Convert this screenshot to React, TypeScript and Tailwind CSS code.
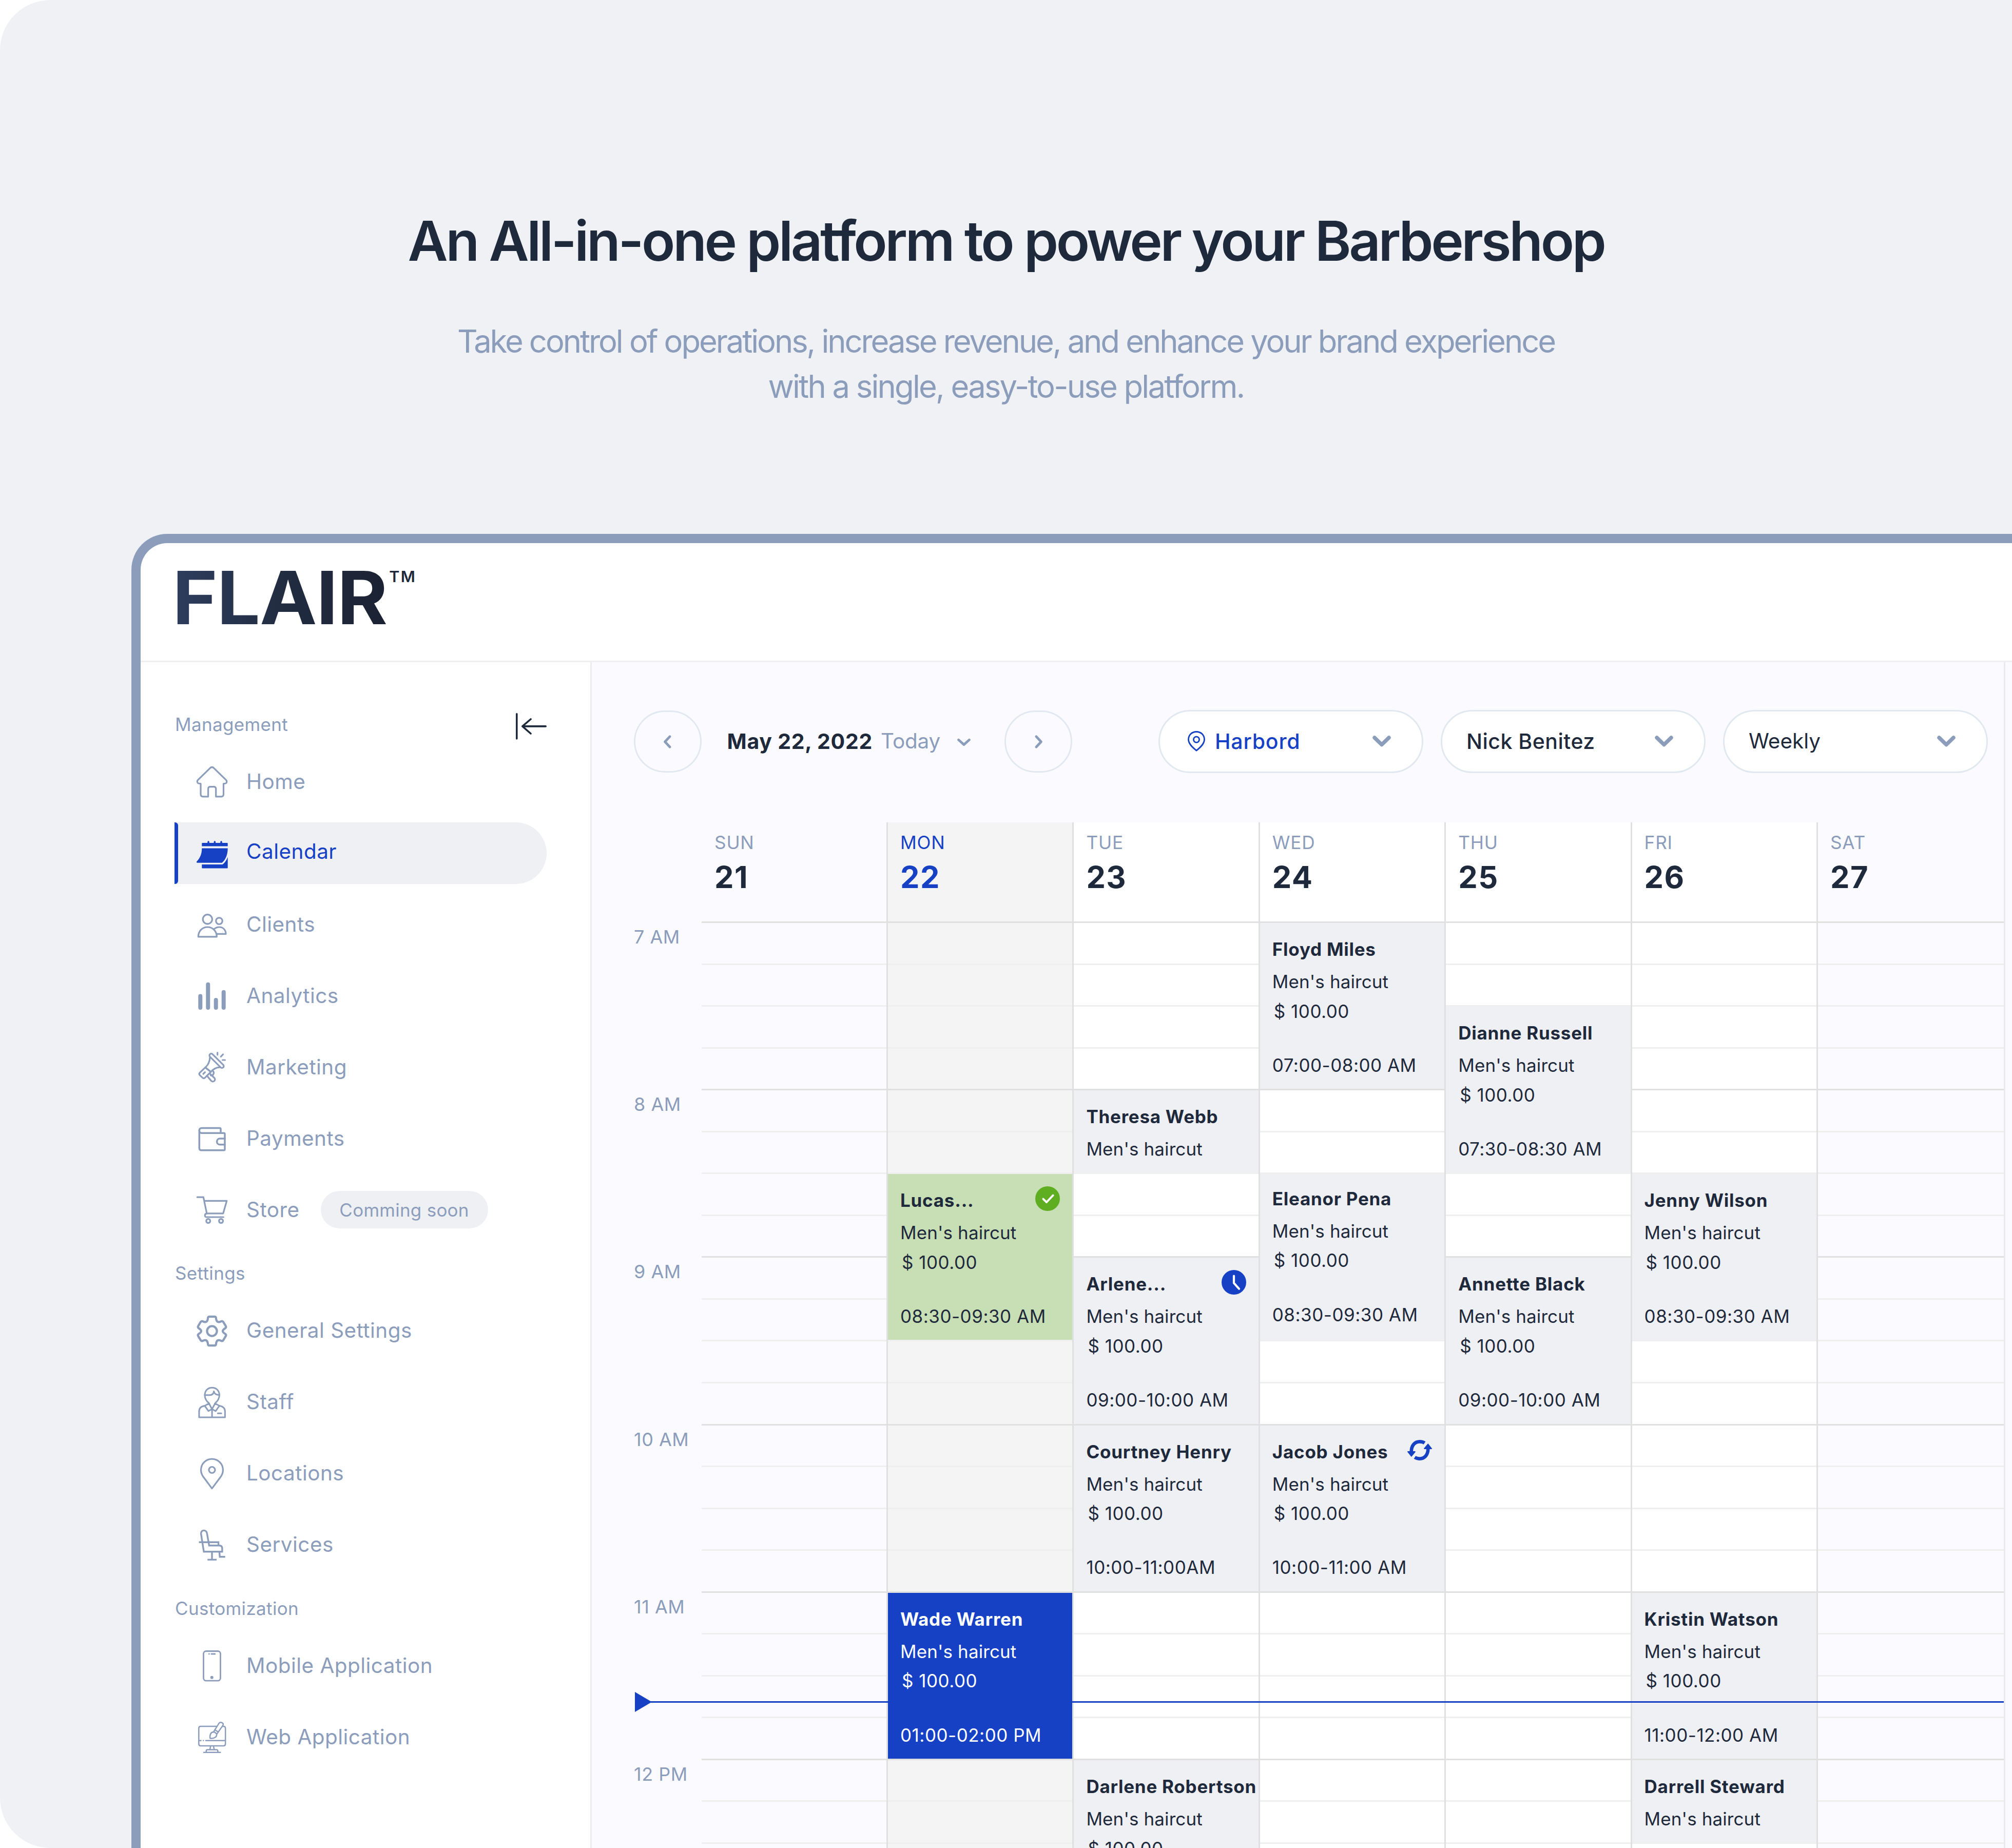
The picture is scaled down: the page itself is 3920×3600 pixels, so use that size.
import type { ReactNode } from "react";

/* ---------- Icons ---------- */

function Icon({ children, width = 3.2, color = "text-[#8c9dbc]" }: { children: ReactNode; width?: number; color?: string }) {
  return (
    <svg
      viewBox="0 0 60 60"
      className={`size-[60px] shrink-0 overflow-visible ${color}`}
      fill="none"
      stroke="currentColor"
      strokeWidth={width}
      strokeLinecap="round"
      strokeLinejoin="round"
    >
      {children}
    </svg>
  );
}

const HomeIcon = () => (
  <Icon>
    <path d="M27 2.6Q30 .4 33 2.6L57.6 26.6Q59.6 29 58.2 31.8Q57 33.5 54 33.5H52.5V54Q52.5 58.8 48 58.8H37.7V44Q37.7 39.7 33.7 39.7H26.6Q22.6 39.7 22.6 44V58.8H12.5Q8 58.8 8 54V33.5H6.2Q3 33.5 2 31.8Q.4 29 2.4 26.6Z" />
  </Icon>
);

const CalendarIcon = () => (
  <svg viewBox="0 0 60 60" className="size-[60px] shrink-0 overflow-visible text-[#1641c5]" fill="currentColor">
    <path d="M10.3 11Q10.3 10 11.3 10H21.3V7.7Q23 4.2 24.8 7.7V10H33.6V7.7Q35.3 4.2 37.1 7.7V10H46.3V7.7Q48 4.2 49.8 7.7V10H59.7Q60.7 10 60.7 11V16.4H10.3Z" />
    <path d="M10.3 20.4H60.7C60.7 34 56 43 49.5 48.7H1.2Q-1 48 .4 46C7 39 10.3 31 10.3 20.4Z" />
    <path d="M10.3 52H50.5C54.8 49 58.5 43.5 60.7 37.4V58.4Q60.7 59.4 59.7 59.4H11.3Q10.3 59.4 10.3 58.4Z" />
  </svg>
);

const ClientsIcon = () => (
  <Icon>
    <circle cx="21.3" cy="19.7" r="9.1" />
    <circle cx="44" cy="23.1" r="6.3" />
    <path d="M3.3 53.8C3.3 43 11 35 21.3 35S39.3 43 39.3 53.8Z" />
    <path d="M34 39C37 36.3 40.5 35 44.3 35C51.5 35 57 40.5 57 48.4H40" />
  </Icon>
);

const AnalyticsIcon = () => (
  <Icon width={8}>
    <path d="M7.3 30.4V53M22.3 7.7V53M37.7 38V53M52.7 22.7V53" />
  </Icon>
);

const MarketingIcon = () => (
  <Icon>
    <rect x="-18.3" y="-3.5" width="36.6" height="7" rx="3.5" transform="translate(39 17.5) rotate(45)" />
    <path d="M26 11C25.6 19 22.6 25.6 17 30.4L27.8 39C32.6 33.6 38.6 30.4 45 30.2" />
    <path d="M17 30.4L6.3 40.6Q4 43 6.2 45.3L12 50.8Q14.2 52.6 16.5 50.3L27.8 39Z" />
    <path d="M13 43L16.4 39.6" />
    <path d="M20.5 47L28.6 56.6A4.1 4.1 0 0 0 34.8 51L26.5 43" />
    <path d="M31 36.5C35.4 39.6 33.4 46.6 27.5 46" />
    <path d="M40.7 1.6V5.8M51.6 4.9L47.3 9.4M50.6 16H55.4" />
  </Icon>
);

const PaymentsIcon = () => (
  <Icon width={3.5}>
    <path d="M5.3 14.5Q5.3 9.4 10 9.4H45Q47 9.4 47 11.4V19.2" />
    <path d="M5.3 14.5Q5.3 19.2 10 19.2H53Q55 19.2 55 21.2V50.7Q55 52.8 53 52.8H9.5Q5.3 52.8 5.3 48.5V14.5" />
    <path d="M55 30H45.5C37.7 30 37.7 41.8 45.5 41.8H55" />
  </Icon>
);

const StoreIcon = () => (
  <Icon>
    <path d="M1.3 5.2H13.3L19.9 36.8H51.8L58.8 12.4H15" />
    <path d="M19.9 36.8C15.2 37.2 15.2 44 19 44H52.3" />
    <circle cx="22.7" cy="51.5" r="3.9" />
    <circle cx="47.6" cy="51.5" r="3.9" />
  </Icon>
);

const SettingsIcon = () => (
  <Icon width={4.2}>
    <circle cx="30" cy="31" r="9.6" />
    <path d="M25 2.8H35Q37.7 2.8 37.9 5.6Q38.4 13 43 13.4Q44.6 13.6 48 12Q50.4 10.9 52 13.2L56.8 21.2Q58.3 23.6 56 25.4Q51 28.4 51 31Q51 33.6 56 36.6Q58.3 38.4 56.8 40.8L52 48.8Q50.4 51.1 48 50Q44.6 48.4 43 48.6Q38.4 49 37.9 56.4Q37.7 59.2 35 59.2H25Q22.3 59.2 22.1 56.4Q21.6 49 17 48.6Q15.4 48.4 12 50Q9.6 51.1 8 48.8L3.2 40.8Q1.7 38.4 4 36.6Q9 33.6 9 31Q9 28.4 4 25.4Q1.7 23.6 3.2 21.2L8 13.2Q9.6 10.9 12 12Q15.4 13.6 17 13.4Q21.6 13 22.1 5.6Q22.3 2.8 25 2.8Z" />
  </Icon>
);

const StaffIcon = () => (
  <Icon width={3}>
    <path d="M24.5 33C19 28.4 16 23 16 17C16 8 22 2.2 30.2 2.2S44.4 8 44.4 17C44.4 23 41 28.4 35.8 33" />
    <path d="M16 16.7H25.5Q33 16.5 33.7 9.5Q34.8 16 44.4 16.7" />
    <path d="M24.4 33.2L15.8 37.5L23.2 47.8L30 44L24.4 33.2M36 33.2L44.5 37.5L37.2 47.8L30 44L36 33.2" />
    <path d="M16 37.6C8 38.8 4.9 42.4 4.9 48.5V60H55.4V48.5C55.4 42.4 51.5 38.8 44.4 37.6M30.1 44V60M41.3 52.3H48.2" />
  </Icon>
);

const LocationIcon = () => (
  <Icon>
    <path d="M30 59.6L13.5 37.5C10 33 8.6 29 8.6 23.7C8.6 11.5 18 2.2 30 2.2S51.4 11.5 51.4 23.7C51.4 29 50 33 46.5 37.5Z" />
    <circle cx="30" cy="23.5" r="6" />
  </Icon>
);

const ServicesIcon = () => (
  <svg viewBox="0 0 60 60" className="size-[60px] shrink-0 overflow-visible text-[#8c9dbc]" fill="none" stroke="currentColor" strokeWidth={3.4}>
    <path d="M14.1 43.7L8.7 9C8 .2 19.4 .2 20.4 8.5L24.5 31.8H44Q49.9 31.8 49.9 37.2V43.7Z" />
    <path d="M4.5 25.3H42.6V31.8M30 43.7V59.3M21.3 59.4H39M44.4 44L45.2 53.8H55.8" />
  </svg>
);

const MobileIcon = () => (
  <Icon width={2.8}>
    <rect x="13.5" y="1.5" width="33" height="57.6" rx="5" />
    <path d="M28.8 7H35.8M24.3 7H24.4" />
    <circle cx="29.8" cy="52.8" r="3" fill="currentColor" stroke="none" />
  </Icon>
);

const WebIcon = () => (
  <Icon width={2.5}>
    <path d="M39 9H8Q4.3 9 4.3 12.7V43.3Q4.3 47 8 47H52.5Q56.2 47 56.2 43.3V12.7Q56.2 9 52.5 9H50.5" />
    <path d="M4.3 36.8H8.6M13.2 36.8H13.3M18 36.8H56" />
    <path d="M27.2 47.5L26 54.3M33 47.5L34.3 54.3M18.8 59V57Q18.8 54.4 21.4 54.4H38.8Q41.4 54.4 41.4 57V59M14 59.7H46.4" />
    <path d="M33 20L43.6 3.2C46.6 -.9 53.5 2.6 51.4 7L39.4 24M35.7 15.8L42.2 20" />
    <path d="M33 20C28 20 25.4 25 26.3 32.3C34 33 39.5 30 39.2 24.5Q37 20.4 33 20Z" />
  </Icon>
);

const CollapseIcon = () => (
  <svg viewBox="0 0 60 52" className="mt-[7px] h-[52px] w-[60px]" fill="none" stroke="#1e293b" strokeWidth={3.6} strokeLinecap="round" strokeLinejoin="round">
    <path d="M1.8 1.8V50M58.2 25.9H12.8M29 12L12.8 25.9L29 40" />
  </svg>
);

const PinIcon = () => (
  <svg viewBox="0 0 34 40" className="h-[40px] w-[34px] shrink-0" fill="none" stroke="#1641c5" strokeWidth={2.8} strokeLinejoin="round">
    <path d="M17 38.2C8 31 1.5 24.5 1.5 16.6C1.5 7.8 8.2 1.5 17 1.5S32.5 7.8 32.5 16.6C32.5 24.5 26 31 17 38.2Z" />
    <circle cx="17" cy="16.8" r="5.6" />
  </svg>
);

const ChevronDown = () => (
  <svg viewBox="0 0 36 22" className="h-[22px] w-[36px] shrink-0" fill="none" stroke="#8c9dbc" strokeWidth={7.4} strokeLinecap="round" strokeLinejoin="round">
    <path d="M4 4L18 17.6L32 4" />
  </svg>
);

const CheckBadge = () => (
  <svg viewBox="0 0 48 48" className="-mt-[9px] -mb-[3px] size-[48px] shrink-0">
    <circle cx="24" cy="24" r="24" fill="#5fad20" />
    <path d="M15.5 24.6L22 31L34.6 17.6" fill="none" stroke="#fff" strokeWidth={4} strokeLinecap="round" strokeLinejoin="round" />
  </svg>
);

const ClockBadge = () => (
  <svg viewBox="0 0 48 48" className="-mt-[9px] -mb-[3px] size-[48px] shrink-0">
    <circle cx="24" cy="24" r="24" fill="#1641c5" />
    <path d="M24 11.5V25.4L34 36.6" fill="none" stroke="#fff" strokeWidth={4.2} strokeLinecap="round" strokeLinejoin="round" />
  </svg>
);

const RefreshBadge = () => (
  <svg viewBox="0 0 48 40" className="-mt-[5px] h-[40px] w-[48px] shrink-0" stroke="#1641c5" strokeLinejoin="round">
    {["rotate(0)", "rotate(180 24 20)"].map((t) => (
      <g key={t} transform={t}>
        <path d="M7.7 23C7.7 10.5 14.8 3.4 24 3.4Q29.4 3.4 33.6 6" fill="none" strokeWidth={6.6} />
        <path d="M1 23L14.8 23L7.8 31.6Z" fill="#1641c5" strokeWidth={2} />
      </g>
    ))}
  </svg>
);

/* ---------- Sidebar ---------- */

type NavItem = { label: string; icon: ReactNode; active?: boolean; tag?: string };

const sections: { title: string; items: NavItem[] }[] = [
  {
    title: "Management",
    items: [
      { label: "Home", icon: <HomeIcon /> },
      { label: "Calendar", icon: <CalendarIcon />, active: true },
      { label: "Clients", icon: <ClientsIcon /> },
      { label: "Analytics", icon: <AnalyticsIcon /> },
      { label: "Marketing", icon: <MarketingIcon /> },
      { label: "Payments", icon: <PaymentsIcon /> },
      { label: "Store", icon: <StoreIcon />, tag: "Comming soon" },
    ],
  },
  {
    title: "Settings",
    items: [
      { label: "General Settings", icon: <SettingsIcon /> },
      { label: "Staff", icon: <StaffIcon /> },
      { label: "Locations", icon: <LocationIcon /> },
      { label: "Services", icon: <ServicesIcon /> },
    ],
  },
  {
    title: "Customization",
    items: [
      { label: "Mobile Application", icon: <MobileIcon /> },
      { label: "Web Application", icon: <WebIcon /> },
    ],
  },
];

function Sidebar() {
  return (
    <aside className="flex w-[879px] shrink-0 flex-col gap-[38.4px] border-r-[3px] border-[#ededf1] pt-[95.3px] pr-[85px] pl-[66px]">
      {sections.map((s, i) => (
        <section key={s.title}>
          <div className="flex h-[52px] items-center justify-between">
            <h2 className="-mt-px pl-px text-[35px] leading-[44px] tracking-[0.35px] text-[#8c9dbc]">{s.title}</h2>
            {i === 0 && <CollapseIcon />}
          </div>
          <nav className="mt-[25.3px] flex flex-col gap-[19px]">
            {s.items.map((it) =>
              it.active ? (
                <a key={it.label} className="flex h-[120px] items-center rounded-r-full bg-[#eff0f4]">
                  <span className="h-[120px] w-[6.5px] rounded-r-[6px] bg-[#1641c5]" />
                  <span className="ml-[36.5px] flex items-center gap-[37px]">
                    {it.icon}
                    <span className="-mt-[5px] text-[40.5px] leading-[50px] tracking-[0.45px] text-[#1641c5]">{it.label}</span>
                  </span>
                </a>
              ) : (
                <a key={it.label} className="flex h-[120px] items-center gap-[37px] pl-[43px]">
                  {it.icon}
                  <span className="text-[40.5px] leading-[50px] tracking-[0.45px] text-[#8c9dbc]">{it.label}</span>
                  {it.tag && (
                    <span className="ml-[4px] flex h-[73px] w-[326px] items-center justify-center rounded-full bg-[#eff0f4] text-[35px] leading-[44px] tracking-[0.25px] text-[#8c9dbc]">
                      {it.tag}
                    </span>
                  )}
                </a>
              ),
            )}
          </nav>
        </section>
      ))}
    </aside>
  );
}

/* ---------- Toolbar ---------- */

function RoundButton({ d }: { d: string }) {
  return (
    <button className="flex h-[121px] w-[132px] shrink-0 items-center justify-center rounded-full border-[3px] border-[#e2e8f0]">
      <svg viewBox="0 0 16 26" className="h-[26px] w-[16px]" fill="none" stroke="#8c9dbc" strokeWidth={4.8} strokeLinecap="round" strokeLinejoin="round">
        <path d={d} />
      </svg>
    </button>
  );
}

function Select({ children }: { children: ReactNode }) {
  return (
    <button className="flex h-[123px] w-[515.5px] shrink-0 items-center justify-between rounded-full border-[3px] border-[#e2e8f0] bg-white pr-[59.5px] pb-[2px] pl-[47px] text-[41px] leading-[50px]">
      {children}
      <ChevronDown />
    </button>
  );
}

function Toolbar() {
  return (
    <div className="flex h-[123px] items-center pl-[82px]">
      <RoundButton d="M12 2.8L2.6 13L12 23.2" />
      <div className="flex w-[590px] items-center pb-[2px] pl-[49.5px]">
        <span className="text-[41px] leading-[50px] font-bold tracking-[0.75px] text-[#1e293b]">May 22, 2022</span>
        <span className="ml-[16px] text-[40.5px] leading-[50px] tracking-[-0.2px] text-[#8c9dbc]">Today</span>
        <svg viewBox="0 0 26 16" className="mt-[4px] ml-[33px] h-[16px] w-[26px]" fill="none" stroke="#8c9dbc" strokeWidth={4.8} strokeLinecap="round" strokeLinejoin="round">
          <path d="M2.6 3.2L13 12.6L23.4 3.2" />
        </svg>
      </div>
      <RoundButton d="M4 2.8L13.4 13L4 23.2" />
      <div className="ml-[168px] flex gap-[34.5px]">
        <Select>
          <span className="flex items-center gap-[19px] pl-[7px] font-medium tracking-[0.8px] text-[#1641c5]">
            <PinIcon />
            Harbord
          </span>
        </Select>
        <Select>
          <span className="font-medium tracking-[0.5px] text-[#1e293b]">Nick Benitez</span>
        </Select>
        <Select>
          <span className="text-[40.5px] text-[#1e293b]">Weekly</span>
        </Select>
      </div>
    </div>
  );
}

/* ---------- Calendar ---------- */

type Booking = {
  name: string;
  start: number;
  span?: number;
  time?: string;
  tone?: "gray" | "green" | "blue";
  badge?: ReactNode;
  short?: boolean;
  raised?: boolean;
};

type Day = { name: string; date: string; kind?: "weekend" | "today"; bookings: Booking[] };

/* `start` counts quarter-hour slots from 7 AM */
const days: Day[] = [
  { name: "SUN", date: "21", kind: "weekend", bookings: [] },
  {
    name: "MON",
    date: "22",
    kind: "today",
    bookings: [
      { name: "Lucas...", start: 6, time: "08:30-09:30 AM", tone: "green", badge: <CheckBadge /> },
      { name: "Wade Warren", start: 16, time: "01:00-02:00 PM", tone: "blue" },
    ],
  },
  {
    name: "TUE",
    date: "23",
    bookings: [
      { name: "Theresa Webb", start: 4, span: 2, short: true },
      { name: "Arlene...", start: 8, time: "09:00-10:00 AM", badge: <ClockBadge /> },
      { name: "Courtney Henry", start: 12, time: "10:00-11:00AM" },
      { name: "Darlene Robertson", start: 20 },
    ],
  },
  {
    name: "WED",
    date: "24",
    bookings: [
      { name: "Floyd Miles", start: 0, time: "07:00-08:00 AM" },
      { name: "Eleanor Pena", start: 6, time: "08:30-09:30 AM", raised: true },
      { name: "Jacob Jones", start: 12, time: "10:00-11:00 AM", badge: <RefreshBadge /> },
    ],
  },
  {
    name: "THU",
    date: "25",
    bookings: [
      { name: "Dianne Russell", start: 2, time: "07:30-08:30 AM" },
      { name: "Annette Black", start: 8, time: "09:00-10:00 AM" },
    ],
  },
  {
    name: "FRI",
    date: "26",
    bookings: [
      { name: "Jenny Wilson", start: 6, time: "08:30-09:30 AM" },
      { name: "Kristin Watson", start: 16, time: "11:00-12:00 AM" },
      { name: "Darrell Steward", start: 20, span: 2, short: true },
    ],
  },
  { name: "SAT", date: "27", kind: "weekend", bookings: [] },
];

const hours = ["7 AM", "8 AM", "9 AM", "10 AM", "11 AM", "12 PM"];
const slots = Array.from({ length: 24 }, (_, i) => i);

const tones = {
  gray: "bg-[#eff0f4] text-[#1e293b]",
  green: "bg-[#c8dfb5] text-[#1e293b]",
  blue: "relative z-20 bg-[#1641c5] text-white",
};

function BookingCard({ b }: { b: Booking }) {
  const span = b.span ?? 4;
  return (
    <article
      className={`col-start-1 mb-[3px] flex flex-col overflow-hidden pr-[24px] pl-[24px] text-[35px] leading-[44px] whitespace-nowrap ${b.raised ? "pt-[25.6px]" : "pt-[29px]"} ${tones[b.tone ?? "gray"]}`}
      style={{ gridRow: `${b.start + 1} / span ${span}` }}
    >
      <div className="flex h-[44px] items-center justify-between">
        <h3 className="font-bold tracking-[0.75px]">{b.name}</h3>
        {b.badge}
      </div>
      <p className="mt-[19px] tracking-[0.1px]">Men's haircut</p>
      {!b.short && <p className="mt-[13.6px] pl-[3px] tracking-[0.5px]">$ 100.00</p>}
      {b.time && <p className="mt-[61.3px] tracking-[0.5px]">{b.time}</p>}
    </article>
  );
}

function DayColumn({ day, first, last }: { day: Day; first: boolean; last: boolean }) {
  const bg = day.kind === "today" ? "bg-[#f4f4f4]" : day.kind === "weekend" ? "" : "bg-white";
  const size = first ? "w-[360px]" : last ? "w-[365px] border-l-[3px]" : "w-[362.4px] border-l-[3px]";
  const today = day.kind === "today";
  return (
    <div className={`shrink-0 border-[#e0e0e0] ${size} ${bg}`}>
      <header className={`h-[196px] border-b-[3px] border-[#e0e0e0] pt-[17px] ${first ? "pl-[25px]" : "pl-[24px]"}`}>
        <p className={`text-[35.2px] leading-[44px] tracking-[0.8px] ${today ? "text-[#1641c5]" : "text-[#8c9dbc]"}`}>{day.name}</p>
        <p className={`mt-[13.3px] text-[59.5px] leading-[64px] font-bold tracking-[1.5px] ${today ? "text-[#1641c5]" : "text-[#1e293b]"}`}>{day.date}</p>
      </header>
      <div className="grid auto-rows-[81.55px] grid-cols-1">
        {slots.map((i) => (
          <div
            key={i}
            className={`col-start-1 border-b-[3px] ${i % 4 === 3 ? "border-[#e0e0e0]" : "border-[#efefef]"}`}
            style={{ gridRow: i + 1 }}
          />
        ))}
        {day.bookings.map((b) => (
          <BookingCard key={b.name} b={b} />
        ))}
      </div>
    </div>
  );
}

function Calendar() {
  return (
    <div className="relative mt-[96px] flex pl-[82px]">
      <div className="w-[132px] shrink-0 pt-[196px]">
        {hours.map((h) => (
          <div key={h} className="h-[326.2px] pt-[5px] text-[36px] leading-[44px] tracking-[0.5px] whitespace-nowrap text-[#8c9dbc]">
            {h}
          </div>
        ))}
      </div>
      {days.map((d, i) => (
        <DayColumn key={d.name} day={d} first={i === 0} last={i === days.length - 1} />
      ))}
      <div className="absolute top-[1694px] right-0 left-[83.5px] z-10 flex items-center">
        <svg viewBox="0 0 33 39" className="h-[39px] w-[33px] shrink-0" fill="#1641c5">
          <path d="M0 0L33 19.5L0 39Z" />
        </svg>
        <span className="-ml-[3px] h-[3px] flex-1 bg-[#1641c5]" />
      </div>
    </div>
  );
}

/* ---------- Page ---------- */

export default function App() {
  return (
    <div className="h-[3600px] w-[3920px] overflow-hidden bg-white font-['Inter',sans-serif] antialiased">
      <div className="flex h-full flex-col overflow-hidden rounded-l-[98px] bg-[#eff1f5]">
        <header className="flex h-[1040px] shrink-0 flex-col items-center pt-[405px] text-center">
          <h1 className="text-[107.5px] leading-[128px] font-semibold tracking-[-4.4px] text-[#1e293b]">
            An All-in-one platform to power your Barbershop
          </h1>
          <p className="mt-[87.5px] text-[61.5px] leading-[88px] tracking-[-3.08px] text-[#8c9dbc]">
            Take control of operations, increase revenue, and enhance your brand experience
            <br />
            <span className="tracking-[-2.8px]">with a single, easy-to-use platform.</span>
          </p>
        </header>

        <div className="ml-[256px] flex h-[2560px] flex-col overflow-hidden rounded-tl-[70px] border-t-[18px] border-l-[18px] border-[#8c9dbc] bg-white">
          <div className="flex h-[232px] shrink-0 items-start border-b-[3px] border-[#efeff2] pt-[34.6px] pl-[62px]">
            <span className="origin-left scale-x-105 bg-linear-to-r from-[#2f3d5e] via-[#222d42] to-[#1b2233] bg-clip-text text-[142.5px] leading-[142px] font-bold tracking-[-1.2px] text-transparent">
              FLAIR
            </span>
            <span className="mt-[15.5px] ml-[24px] text-[30.5px] leading-[30px] font-semibold tracking-[2.4px] text-[#1e293b]">TM</span>
          </div>
          <div className="flex h-[2310px]">
            <Sidebar />
            <main className="w-[2754px] shrink-0 overflow-hidden border-r-[3px] border-[#e9e9ee] bg-[#fbfbff] pt-[93px]">
              <Toolbar />
              <Calendar />
            </main>
            <div className="flex-1 bg-[#fbfbff]" />
          </div>
        </div>
      </div>
    </div>
  );
}
